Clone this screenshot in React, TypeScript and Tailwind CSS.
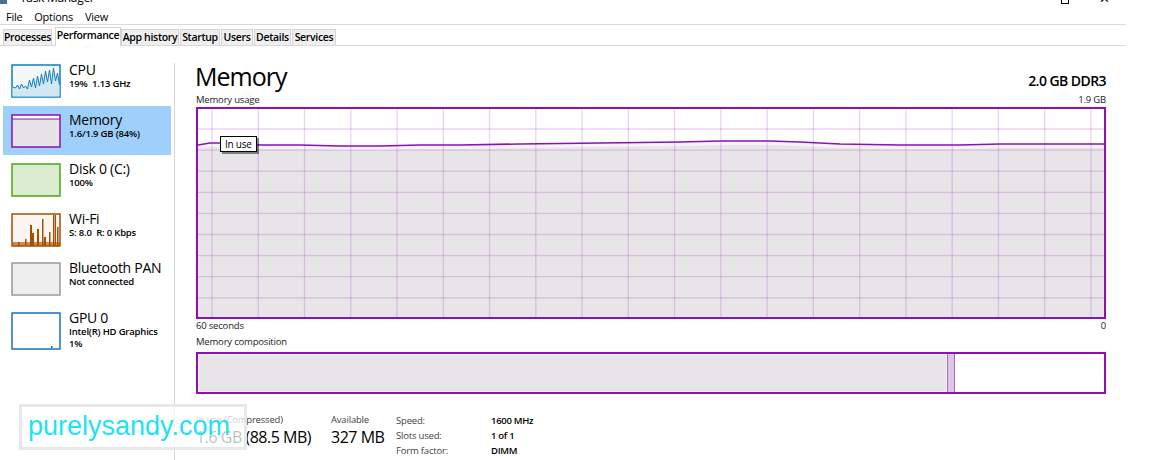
// Task Manager – Performance / Memory view

import React from 'react';

const PURPLE = '#8b12ae';

const tabs = [
  { label: 'Processes', cls: 'ml-[3px] w-[49px]' },
  { label: 'Performance', cls: 'ml-[3px] w-[66px]', active: true },
  { label: 'App history', cls: 'w-[58px]' },
  { label: 'Startup', cls: 'ml-px w-[40px]' },
  { label: 'Users', cls: 'ml-px w-[32px]' },
  { label: 'Details', cls: 'ml-px w-[37px]' },
  { label: 'Services', cls: 'ml-px w-[44px]' },
];

const shift = (pts: string) =>
  pts
    .split(' ')
    .map((p) => {
      const [x, y] = p.split(',');
      return `${+x + 1.5},${+y + 1}`;
    })
    .join(' ');

function CpuThumb() {
  const pts = shift(
    '0,22 3,23 5,20 7,24 9,19 11,23 13,21 15,24 17,15 19,22 21,13 23,23 25,11 27,21 29,9 31,19 33,6 35,17 37,5 39,19 41,3 43,16 45,8 47,20'
  );
  return (
    <svg width="50" height="34" viewBox="0 0 50 34">
      <rect x="1" y="1" width="48" height="32" fill="#f4f8fb" stroke="#117dbb" strokeWidth="1.5" />
      <polygon points={`1.5,32.5 ${pts} 48.5,32.5`} fill="#d3e6f3" />
      <polyline points={pts} fill="none" stroke="#117dbb" strokeWidth="1" />
    </svg>
  );
}

function MemoryThumb() {
  return (
    <svg width="50" height="34" viewBox="0 0 50 34">
      <rect x="1" y="1" width="48" height="32" fill="#ffffff" />
      <rect x="1" y="5" width="48" height="28" fill="#e6e3e6" />
      <line x1="1" y1="5" x2="49" y2="5" stroke={PURPLE} strokeWidth="1" />
      <rect x="1" y="1" width="48" height="32" fill="none" stroke={PURPLE} strokeWidth="1.5" />
    </svg>
  );
}

function DiskThumb() {
  return (
    <svg width="50" height="34" viewBox="0 0 50 34">
      <rect x="1" y="1" width="48" height="32" fill="#dcecd0" stroke="#4da60c" strokeWidth="1.5" />
    </svg>
  );
}

function WifiThumb() {
  const spikes = [
    [7, 29, 1.5],
    [14, 26, 1.5],
    [19, 12, 2],
    [21, 20, 2],
    [26, 16, 2],
    [31, 6, 1.5],
    [33, 24, 2],
    [38, 19, 1.5],
    [42, 2, 1.5],
    [44, 2, 1],
    [46, 14, 1.5],
  ];
  return (
    <svg width="50" height="34" viewBox="0 0 50 34">
      <rect x="1" y="1" width="48" height="32" fill="#fbf6f2" />
      <rect x="1" y="29" width="48" height="4" fill="#c98a56" />
      {spikes.map(([x, y, w], i) => (
        <rect key={i} x={x} y={y} width={w} height={33 - y} fill="#a74f01" />
      ))}
      <rect x="1" y="1" width="48" height="32" fill="none" stroke="#a74f01" strokeWidth="1.5" />
    </svg>
  );
}

function BluetoothThumb() {
  return (
    <svg width="50" height="34" viewBox="0 0 50 34">
      <rect x="1" y="1" width="48" height="32" fill="#eeeeee" stroke="#9b9b9b" strokeWidth="1.5" />
    </svg>
  );
}

function GpuThumb() {
  return (
    <svg width="50" height="38" viewBox="0 0 50 38">
      <rect x="1" y="1" width="48" height="36" fill="#ffffff" stroke="#1c6fbd" strokeWidth="1.5" />
      <rect x="40" y="34" width="1.5" height="2" fill="#1c6fbd" />
    </svg>
  );
}

const devices = [
  { title: 'CPU', lines: ['19%  1.13 GHz'], thumb: <CpuThumb /> },
  { title: 'Memory', lines: ['1.6/1.9 GB (84%)'], thumb: <MemoryThumb />, active: true },
  { title: 'Disk 0 (C:)', lines: ['100%'], thumb: <DiskThumb /> },
  { title: 'Wi-Fi', lines: ['S: 8.0  R: 0 Kbps'], thumb: <WifiThumb /> },
  { title: 'Bluetooth PAN', lines: ['Not connected'], thumb: <BluetoothThumb /> },
  { title: 'GPU 0', lines: ['Intel(R) HD Graphics', '1%'], thumb: <GpuThumb /> },
];

function UsageGraph() {
  const w = 906;
  const h = 208;
  const line: [number, number][] = [
    [0, 36], [12, 34], [30, 34], [62, 36], [102, 36], [142, 37], [182, 37], [222, 36],
    [262, 36], [322, 35], [402, 34], [482, 33], [522, 32], [572, 32], [602, 33],
    [642, 35], [702, 36], [762, 36], [802, 35], [842, 35], [906, 35],
  ];
  const linePts = line.map(([x, y]) => `${x},${y}`).join(' ');
  const vLines = Array.from({ length: 20 }, (_, k) => 14 + k * 46.26);
  const hLines = Array.from({ length: 9 }, (_, k) => 20 + k * 21.1);
  return (
    <svg width={w} height={h} viewBox={`0 0 ${w} ${h}`} className="block">
      <polygon points={`0,${h} ${linePts} ${w},${h}`} fill="#e8e5e8" />
      <polyline points={linePts} fill="none" stroke="#f6f3f6" strokeWidth="4" transform="translate(0,2)" />
      {vLines.map((x) => (
        <line key={`v${x}`} x1={x} y1="0" x2={x} y2={h} stroke="rgba(139,18,174,0.18)" strokeWidth="1.3" />
      ))}
      {hLines.map((y) => (
        <line key={`h${y}`} x1="0" y1={y} x2={w} y2={y} stroke="rgba(139,18,174,0.18)" strokeWidth="1.3" />
      ))}
      <polyline points={linePts} fill="none" stroke={PURPLE} strokeWidth="1.6" />
    </svg>
  );
}

export default function App() {
  return (
    <div className="relative w-[1154px] h-[460px] overflow-hidden bg-white text-black font-['Open_Sans','Noto_Sans',sans-serif]">
      <div className="w-[1126px]">
        {/* Title bar (mostly cut off) */}
        <div className="h-[9px] overflow-hidden">
          <div className="-mt-[9px] h-[14px] flex items-center text-[12px] leading-[14px]">
            <div className="ml-0 w-[7px] h-[12px] bg-[#4a6f96]" />
            <span className="ml-[13px] tracking-tight">Task Manager</span>
            <div className="ml-auto flex items-center gap-[30px] mr-[16px]">
              <div className="w-[8px] h-[12px] border-[1.5px] border-black" />
              <span className="text-[13px] leading-[14px]">✕</span>
            </div>
          </div>
        </div>

        {/* Menu bar */}
        <div className="h-[15px] flex items-center text-[11px] leading-[15px] font-medium tracking-tight">
          <span className="ml-[6px]">File</span>
          <span className="ml-[12px]">Options</span>
          <span className="ml-[12px]">View</span>
        </div>

        {/* Tabs */}
        <div className="h-[22px] border-t border-b border-[#d9d9d9] flex items-end">
          {tabs.map((t) => (
            <div
              key={t.label}
              className={`${t.cls} flex items-center justify-center border border-b-0 border-[#d4d4d4] text-[10.5px] font-semibold tracking-[-0.03em] whitespace-nowrap ${
                t.active ? 'h-[19px] -mb-px bg-white pb-[2px]' : 'h-[16px] bg-[#efefef]'
              }`}
            >
              {t.label}
            </div>
          ))}
        </div>
      </div>

      {/* Body */}
      <div className="flex h-[414px]">
        {/* Sidebar */}
        <div className="w-[174px] pt-[10px]">
          {devices.map((d) => (
            <div
              key={d.title}
              className={`mx-[3px] h-[49.5px] pl-[8px] pt-[8px] flex gap-[8px] ${d.active ? 'bg-[#9fd0fb]' : ''}`}
            >
              <div className="shrink-0">{d.thumb}</div>
              <div className="-mt-[2px]">
                <div className="text-[14px] leading-[16px] tracking-[-0.02em]">{d.title}</div>
                {d.lines.map((l) => (
                  <div key={l} className="text-[9.5px] leading-[12px] font-semibold tracking-[-0.02em] whitespace-pre">
                    {l}
                  </div>
                ))}
              </div>
            </div>
          ))}
        </div>
        <div className="w-px mt-[17px] bg-[#d6d6d6]" />

        {/* Content */}
        <div className="ml-[21px] w-[910px] pt-[14px]">
          <div className="flex items-baseline justify-between h-[33px]">
            <span className="text-[25px] leading-[33px] tracking-[-0.04em] -ml-px">Memory</span>
            <span className="text-[14px] font-semibold tracking-[-0.04em]">2.0 GB DDR3</span>
          </div>
          <div className="flex justify-between text-[9.5px] leading-[13px] font-medium tracking-[-0.02em] text-[#222]">
            <span>Memory usage</span>
            <span>1.9 GB</span>
          </div>

          <div className="relative mt-[1px] w-[910px] h-[212px] border-2 border-[#8b12ae]">
            <UsageGraph />
            <div className="absolute left-[22px] top-[27px] h-[16px] px-[4px] bg-white border border-black text-[10px] leading-[14px] font-medium tracking-tight shadow-[2px_2px_0_rgba(0,0,0,0.45)]">
              In use
            </div>
          </div>

          <div className="flex justify-between text-[9.5px] leading-[14px] font-medium tracking-[-0.02em] text-[#222]">
            <span>60 seconds</span>
            <span>0</span>
          </div>
          <div className="mt-[2px] text-[9.5px] leading-[14px] font-medium tracking-[-0.02em] text-[#222]">
            Memory composition
          </div>

          <div className="mt-[3px] w-[910px] h-[42px] border-2 border-[#8b12ae] flex">
            <div className="w-[749px] h-full bg-[#e8e5e8] border border-[#f4f2f4]" />
            <div className="w-[8px] h-full bg-[#dbc6e3] border-x border-[#a66bc0]" />
            <div className="flex-1 h-full bg-white" />
          </div>

          {/* Stats */}
          <div className="mt-[19px] flex">
            <div className="w-[135px]">
              <div className="text-[9.5px] leading-[14px] tracking-[-0.02em] text-[#444]">In use (Compressed)</div>
              <div className="text-[16px] leading-[20px] tracking-[-0.03em]">1.6 GB (88.5 MB)</div>
            </div>
            <div className="w-[65px]">
              <div className="text-[9.5px] leading-[14px] tracking-[-0.02em] text-[#444]">Available</div>
              <div className="text-[16px] leading-[20px] tracking-[-0.03em]">327 MB</div>
            </div>
            <div className="w-[95px] text-[9.5px] leading-[15px] tracking-[-0.02em] text-[#444]">
              <div>Speed:</div>
              <div>Slots used:</div>
              <div>Form factor:</div>
            </div>
            <div className="text-[9.5px] leading-[15px] font-semibold tracking-[-0.03em]">
              <div>1600 MHz</div>
              <div>1 of 1</div>
              <div>DIMM</div>
            </div>
          </div>
          <div className="flex text-[9.5px] leading-[14px] tracking-[-0.02em] text-[#444]">
            <span className="w-[94px]">Committed</span>
            <span>Cached</span>
          </div>
        </div>
      </div>

      {/* Watermark */}
      <div className="absolute left-[19px] top-[404px] w-[228px] h-[46px] bg-white/75 border-[3px] border-[#e2e2e2]/80 flex items-center pl-[6px]">
        <span className="text-[27px] leading-[30px] text-[#1fe3f2] font-['Liberation_Sans',sans-serif] -mt-[2px]">
          purelysandy.com
        </span>
      </div>
    </div>
  );
}
